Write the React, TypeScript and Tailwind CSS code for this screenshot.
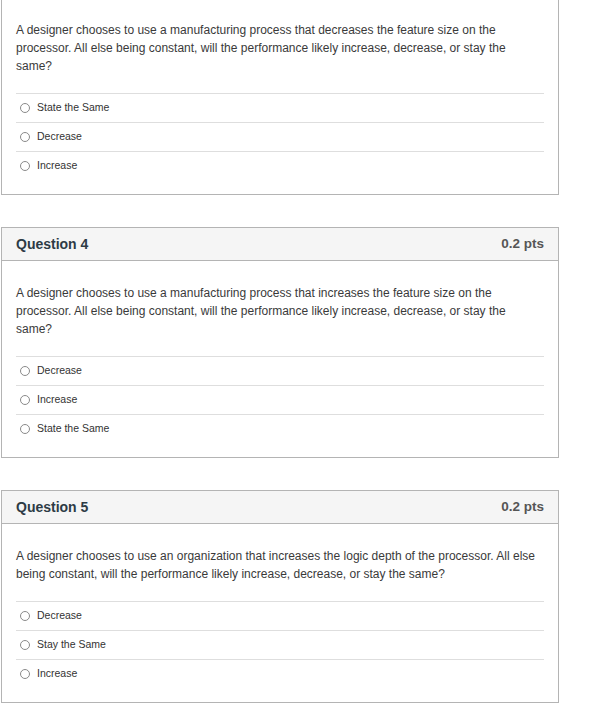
type Question = {
  title: string;
  points: string;
  text: string;
  options: string[];
};

const QUESTIONS: Question[] = [
  {
    title: "Question 3",
    points: "0.2 pts",
    text: "A designer chooses to use a manufacturing process that decreases the feature size on the processor. All else being constant, will the performance likely increase, decrease, or stay the same?",
    options: ["State the Same", "Decrease", "Increase"],
  },
  {
    title: "Question 4",
    points: "0.2 pts",
    text: "A designer chooses to use a manufacturing process that increases the feature size on the processor. All else being constant, will the performance likely increase, decrease, or stay the same?",
    options: ["Decrease", "Increase", "State the Same"],
  },
  {
    title: "Question 5",
    points: "0.2 pts",
    text: "A designer chooses to use an organization that increases the logic depth of the processor. All else being constant, will the performance likely increase, decrease, or stay the same?",
    options: ["Decrease", "Stay the Same", "Increase"],
  },
];

function QuestionCard({ q }: { q: Question }) {
  return (
    <section className="ml-px w-[558px] border border-[#b4b4b4] bg-white">
      <header className="flex h-[33px] items-center justify-between border-b border-[#b4b4b4] bg-[#f5f5f5] px-[14px]">
        <h2 className="text-[14px] font-bold text-[#2d3b45]">{q.title}</h2>
        <span className="text-[13.5px] font-bold text-[#555]">{q.points}</span>
      </header>

      <div className="px-[14px] pb-[14px] pt-[23px]">
        <p className="text-[12px] leading-[18px] text-[#3a3a3a]">{q.text}</p>

        <div className="mt-[18px]">
          {q.options.map((opt) => (
            <label
              key={opt}
              className="flex h-[29px] items-center gap-[7px] border-t border-[#dedede] pl-[4px]"
            >
              <span className="h-[10px] w-[10px] rounded-full border border-[#8a8a8a] bg-white" />
              <span className="text-[10.5px] text-[#333]">{opt}</span>
            </label>
          ))}
        </div>
      </div>
    </section>
  );
}

export default function App() {
  return (
    <div
      className="h-[711px] w-[616px] overflow-hidden bg-white"
      style={{ fontFamily: '"Liberation Sans", Arial, sans-serif' }}
    >
      <div className="-mt-[36px] flex flex-col gap-[32px]">
        {QUESTIONS.map((q) => (
          <QuestionCard key={q.title} q={q} />
        ))}
      </div>
    </div>
  );
}
